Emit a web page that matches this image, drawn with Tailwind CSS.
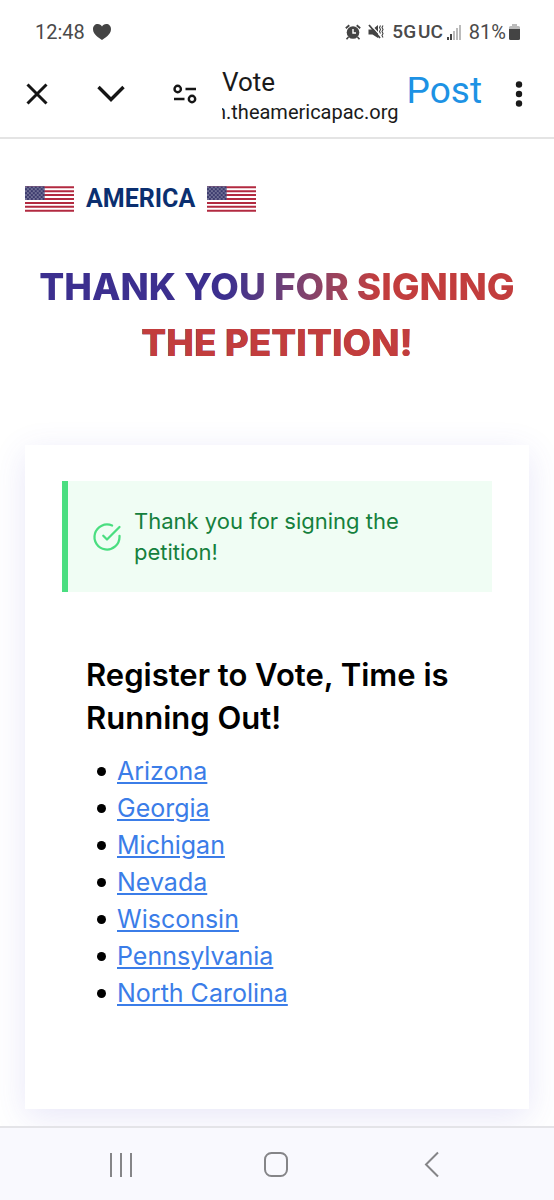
<!DOCTYPE html>
<html lang="en">
<head>
<meta charset="utf-8">
<meta name="viewport" content="width=device-width, initial-scale=1">
<title>Vote</title>
<script src="https://cdn.jsdelivr.net/npm/@tailwindcss/browser@4"></script>
</head>
<body class="min-h-screen flex flex-col bg-white font-['Inter',sans-serif] text-black overflow-x-hidden">

<svg class="absolute w-0 h-0" aria-hidden="true">
  <defs>
    <pattern id="stars" width="4" height="4" patternUnits="userSpaceOnUse">
      <circle cx="1" cy="1" r="0.65" fill="#fff"/><circle cx="3" cy="3" r="0.65" fill="#fff"/>
    </pattern>
    <symbol id="flag" viewBox="0 0 50 26">
      <rect width="50" height="26" fill="#fff"/>
      <path d="M0 1h50M0 5h50M0 9h50M0 13h50M0 17h50M0 21h50M0 25h50" stroke="#b22a40" stroke-width="2"/>
      <rect width="20" height="14" fill="#3c3b6e"/>
      <rect width="20" height="14" fill="url(#stars)" opacity="0.75"/>
    </symbol>
  </defs>
</svg>

<div class="flex items-center justify-between h-16 pl-[35px] pr-[34px] font-['Roboto',sans-serif] text-[#4a4a4a] shrink-0">
  <div class="flex items-center gap-2">
    <span class="text-xl">12:48</span>
    <svg class="w-[18px] h-4" viewBox="0 0 18 16" fill="#444"><path d="M9 16C6.500 14 0 10.500 0 5.200 0 2 2 0 4.700 0 6.700 0 8.200 1 9 2.600 9.800 1 11.300 0 13.300 0 16 0 18 2 18 5.200 18 10.500 11.500 14 9 16z"/></svg>
  </div>
  <div class="flex items-center">
    <svg class="w-4 h-4 mr-[7px]" viewBox="0 0 16 16" fill="none" stroke="#444"><circle cx="8" cy="8.500" r="6.300" fill="#444" stroke="none"/><path d="M.8 4.200 4.300 1.200M11.700 1.200l3.500 3" stroke-width="1.800"/><path d="m3.500 13-2 2.300M12.500 13l2 2.300" stroke-width="1.600"/><path d="M8 5v4h3" stroke="#fff" stroke-width="1.400"/></svg>
    <svg class="w-4 h-4 mr-2" viewBox="0 0 16 16" fill="none" stroke="#444"><path d="M.5 5.500h4L10 1v13l-5.500-3.500h-4z" fill="#444" stroke="none"/><path d="M2.500 .5 12 11" stroke="#fff" stroke-width="1.200"/><path d="m1 1 11 13" stroke-width="1.800"/><path d="m12.500 1.500-1 2 1 2-1 2 1 2M15 1.500l-1 2 1 2-1 2 1 2-1 2 1 2" stroke-width="1.100"/></svg>
    <span class="text-[19px] font-medium mr-1">5G&#8202;UC</span>
    <svg class="w-[14px] h-[15px] mr-2" viewBox="0 0 14 15" fill="#444"><path d="M0 12h2v3H0zM3 9h2v6H3z"/><path d="M6 6h2v9H6zM9 3h2v12H9zM12 0h2v15h-2z" fill="#bbb"/></svg>
    <span class="text-xl mr-[3px]">81%</span>
    <svg class="w-[11px] h-4" viewBox="0 0 11 16"><path d="M3 0h5v2h1.500Q11 2 11 3.500V6H0V3.500Q0 2 1.500 2H3z" fill="#bbb"/><path d="M0 5h11v9.500q0 1.500-1.500 1.500h-8Q0 16 0 14.500z" fill="#444"/></svg>
  </div>
</div>

<header class="flex items-center h-[75px] pl-[25px] pr-[23px] pb-[13px] border-b-2 border-[#e4e4e4] font-['Roboto',sans-serif] text-[#1a1a1a] shrink-0">
  <button aria-label="Close" class="mr-[47px]"><svg class="w-6 h-6" viewBox="0 0 24 24" fill="none" stroke="#151515" stroke-width="3"><path d="m2.500 2.500 19 19M21.500 2.500l-19 19"/></svg></button>
  <button aria-label="Minimize" class="mr-[47px]"><svg class="w-[30px] h-6" viewBox="0 0 30 24" fill="none" stroke="#151515" stroke-width="3.400"><path d="m2.500 5 12.500 12.500L27.500 5"/></svg></button>
  <button aria-label="Site settings" class="mr-[25px]"><svg class="w-6 h-6" viewBox="0 0 24 24" fill="none" stroke="#151515" stroke-width="2.400"><circle cx="4.700" cy="7" r="3.200"/><path d="M12.500 7H23M1 17h10.500"/><circle cx="19" cy="17" r="3.200"/></svg></button>
  <div class="min-w-0 flex-1 pt-1">
    <div class="text-[26px] leading-8">Vote</div>
    <div class="flex justify-end overflow-hidden whitespace-nowrap text-xl leading-7">n.theamericapac.org</div>
  </div>
  <button class="ml-2 pb-1.5 text-[37px] leading-12 text-[#1d92e4]">Post</button>
  <button aria-label="More options" class="ml-[25px]"><svg class="w-6 h-7" viewBox="0 0 24 28" fill="#1a1a1a"><circle cx="12" cy="4.500" r="3.200"/><circle cx="12" cy="14" r="3.200"/><circle cx="12" cy="23.500" r="3.200"/></svg></button>
</header>

<main class="flex-1 px-[25px]">
  <div class="flex items-center gap-3 mt-11 h-8 font-['Roboto',sans-serif]">
    <svg class="w-[49px] h-[26px]"><use href="#flag"/></svg>
    <span class="text-[25px] font-bold text-[#0b2f70]">AMERICA</span>
    <svg class="w-[49px] h-[26px]"><use href="#flag"/></svg>
  </div>

  <h1 class="mt-11 text-center text-[37px] leading-14 font-extrabold text-transparent bg-clip-text bg-linear-to-r from-[#3c2f8f] from-40% to-[#c23d3d] to-70%">THANK YOU FOR SIGNING <span class="text-[#c23d3d]">THE PETITION!</span></h1>

  <section class="mt-[74px] min-h-[664px] px-[37px] pt-9 pb-20 bg-white shadow-[0_8px_32px_rgba(80,70,200,0.13)]">
    <div role="status" class="flex items-center gap-3 min-h-[111px] px-6 border-l-6 border-[#4ade80] bg-[#f0fdf4] text-[#15803d]">
      <svg class="w-[30px] h-[30px] shrink-0" viewBox="0 0 24 24" fill="none" stroke="#4ade80" stroke-width="1.800" stroke-linecap="round" stroke-linejoin="round"><path d="M22 11.080V12a10 10 0 1 1-5.930-9.140"/><path d="m22 4-10 10.010-3-3"/></svg>
      <p class="text-[22px] leading-[31px]">Thank you for signing the petition!</p>
    </div>
    <h2 class="mt-[61px] pl-6 text-[31px] leading-[43px] font-semibold">Register to Vote, Time is Running Out!</h2>
    <ul class="mt-3.5 pl-[35px] text-[25px] leading-[37px]">
      <li class="flex items-center gap-[11px] before:size-[9px] before:rounded-full before:bg-black"><a href="#arizona" class="text-[#3b7de8] underline">Arizona</a></li>
      <li class="flex items-center gap-[11px] before:size-[9px] before:rounded-full before:bg-black"><a href="#georgia" class="text-[#3b7de8] underline">Georgia</a></li>
      <li class="flex items-center gap-[11px] before:size-[9px] before:rounded-full before:bg-black"><a href="#michigan" class="text-[#3b7de8] underline">Michigan</a></li>
      <li class="flex items-center gap-[11px] before:size-[9px] before:rounded-full before:bg-black"><a href="#nevada" class="text-[#3b7de8] underline">Nevada</a></li>
      <li class="flex items-center gap-[11px] before:size-[9px] before:rounded-full before:bg-black"><a href="#wisconsin" class="text-[#3b7de8] underline">Wisconsin</a></li>
      <li class="flex items-center gap-[11px] before:size-[9px] before:rounded-full before:bg-black"><a href="#pennsylvania" class="text-[#3b7de8] underline">Pennsylvania</a></li>
      <li class="flex items-center gap-[11px] before:size-[9px] before:rounded-full before:bg-black"><a href="#north-carolina" class="text-[#3b7de8] underline">North Carolina</a></li>
    </ul>
  </section>
</main>

<nav aria-label="System" class="relative mt-4 grid grid-cols-3 place-items-center h-[74px] pl-[42px] pr-11 border-t-2 border-[#e4e4e8] bg-[#f9f9fe] shrink-0">
  <button aria-label="Recent apps"><svg class="w-7 h-7" viewBox="0 0 28 28" fill="none" stroke="#858588" stroke-width="2"><path d="M5 3v24M15 3v24M25 3v24"/></svg></button>
  <button aria-label="Home"><svg class="w-7 h-7" viewBox="0 0 28 28" fill="none" stroke="#858588" stroke-width="2"><rect x="3" y="3" width="22" height="23" rx="6.500"/></svg></button>
  <button aria-label="Back"><svg class="w-7 h-7" viewBox="0 0 28 28" fill="none" stroke="#858588" stroke-width="2"><path d="M20 2.500 8 14.500l12 12"/></svg></button>
</nav>
</body>
</html>
